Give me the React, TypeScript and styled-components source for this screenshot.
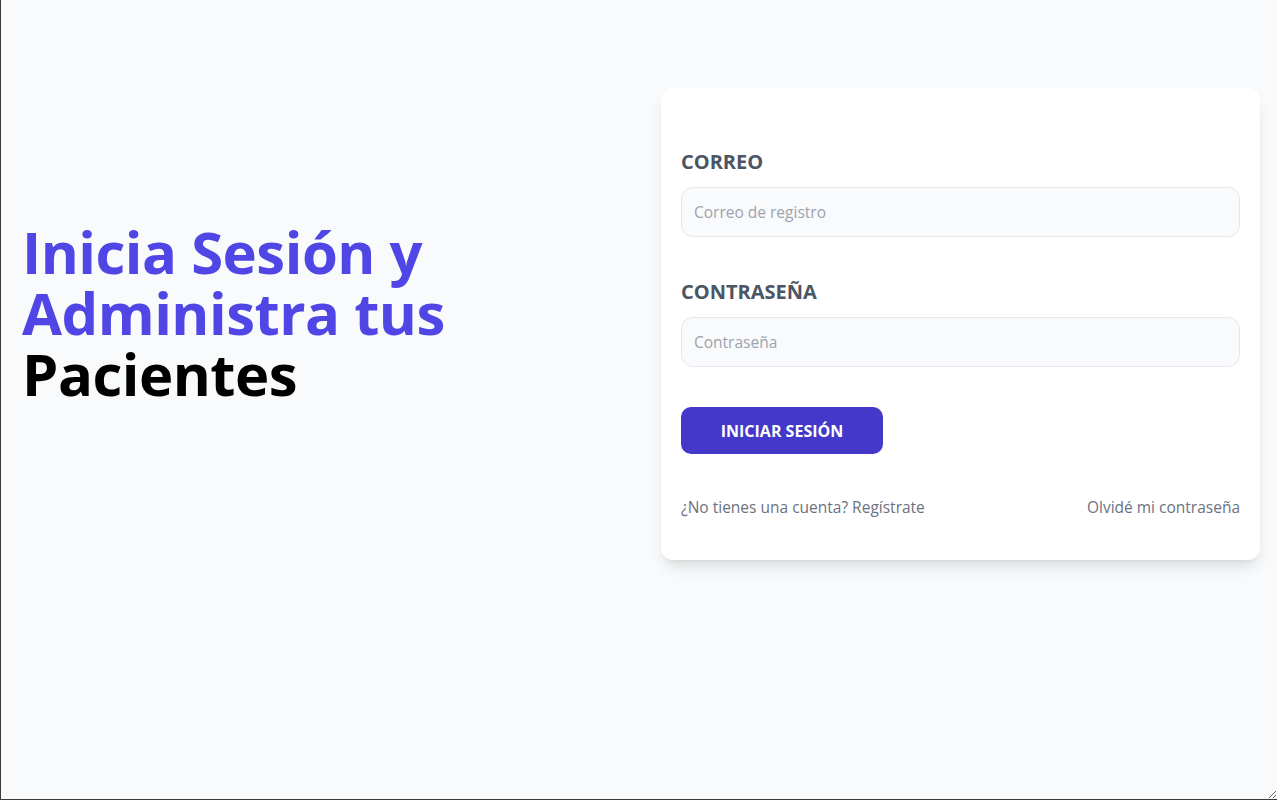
import React from "react";
import styled, { createGlobalStyle } from "styled-components";

const Global = createGlobalStyle`
  html, body { margin: 0; padding: 0; background: #f9fafb; }
  * { box-sizing: border-box; }
  body { font-family: "Open Sans", "Noto Sans", sans-serif; }
`;

const Frame = styled.div`
  height: 800px;
  width: 1277px;
  border-left: 1px solid #3a3a3a;
  border-bottom: 1px solid #3a3a3a;
  background: #f9fafb;
  resize: both;
  overflow: hidden;
`;

const Container = styled.main`
  display: grid;
  grid-template-columns: 599px 599px;
  column-gap: 40px;
  align-items: center;
  padding: 88px 0 0 21px;
`;

const Heading = styled.h1`
  margin: 0 0 24px;
  font-family: "Open Sans", sans-serif;
  font-weight: 700;
  font-size: 58px;
  line-height: 61px;
  letter-spacing: -0.5px;
  color: #4f46e5;
`;

const Dark = styled.span`
  color: #000;
`;

const Card = styled.form`
  background: #fff;
  border-radius: 12px;
  box-shadow: 0 10px 15px -3px rgba(0, 0, 0, 0.1), 0 4px 6px -4px rgba(0, 0, 0, 0.1);
  padding: 60px 20px 41px;
  display: flex;
  flex-direction: column;
`;

const Field = styled.div<{ $top?: number }>`
  display: flex;
  flex-direction: column;
  gap: 11px;
  margin-top: ${(p) => p.$top ?? 0}px;
`;

const Label = styled.label`
  font-family: "Open Sans", sans-serif;
  font-weight: 700;
  font-size: 20px;
  line-height: 28px;
  color: #4b5563;
  text-transform: uppercase;
`;

const Input = styled.input`
  height: 50px;
  width: 100%;
  padding: 0 12px;
  border: 1px solid #e5e7eb;
  border-radius: 12px;
  background: #f9fafb;
  font-family: "Open Sans", sans-serif;
  font-size: 15.5px;
  color: #374151;
  outline: none;
  &::placeholder { color: #9ca3af; }
`;

const Submit = styled.button`
  align-self: flex-start;
  margin-top: 40px;
  width: 202px;
  height: 47px;
  border: none;
  border-radius: 10px;
  background: #4338ca;
  color: #fff;
  font-family: "Open Sans", sans-serif;
  font-weight: 700;
  font-size: 16px;
  text-transform: uppercase;
  cursor: pointer;
`;

const Links = styled.nav`
  margin-top: 41px;
  display: flex;
  justify-content: space-between;
  align-items: center;
`;

const LinkText = styled.a`
  font-family: "Open Sans", sans-serif;
  font-size: 15.5px;
  line-height: 24px;
  color: #6b7280;
  text-decoration: none;
`;

export default function App() {
  return (
    <>
      <Global />
      <Frame>
        <Container>
          <Heading>
            Inicia Sesión y Administra tus <Dark>Pacientes</Dark>
          </Heading>
          <Card onSubmit={(e) => e.preventDefault()}>
            <Field>
              <Label htmlFor="email">Correo</Label>
              <Input id="email" type="email" placeholder="Correo de registro" />
            </Field>
            <Field $top={41}>
              <Label htmlFor="password">Contraseña</Label>
              <Input id="password" type="password" placeholder="Contraseña" />
            </Field>
            <Submit type="submit">Iniciar Sesión</Submit>
            <Links>
              <LinkText href="#">¿No tienes una cuenta? Regístrate</LinkText>
              <LinkText href="#">Olvidé mi contraseña</LinkText>
            </Links>
          </Card>
        </Container>
      </Frame>
    </>
  );
}
